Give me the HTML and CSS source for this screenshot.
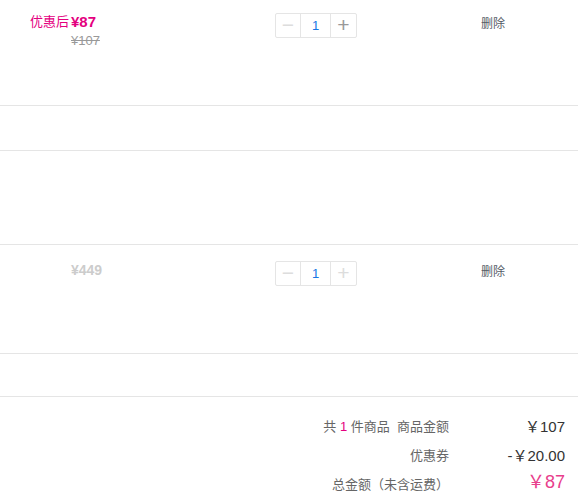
FILE: index.html
```html
<!DOCTYPE html>
<html>
  <head>
    <meta charset="UTF-8">
    <title>购物车</title>
    <link rel="stylesheet" href="styles.css">
  </head>
  <body>
    <div class="cart">
      <div class="item">
        <div class="price">
          <div class="price-now"><span class="tag">优惠后</span>¥87</div>
          <div class="price-old">¥107</div>
        </div>
        <div class="stepper">
          <span class="step off">&minus;</span>
          <span class="count">1</span>
          <span class="step">+</span>
        </div>
        <div class="del">删除</div>
      </div>
      <div class="gap small"></div>
      <div class="gap big"></div>
      <div class="item">
        <div class="price">
          <div class="price-now dead">¥449</div>
        </div>
        <div class="stepper">
          <span class="step off">&minus;</span>
          <span class="count">1</span>
          <span class="step off">+</span>
        </div>
        <div class="del">删除</div>
      </div>
      <div class="gap last"></div>
    </div>

    <div class="summary">
      <div class="label">共 <em>1</em> 件商品&nbsp;&nbsp;商品金额</div>
      <div class="value">￥107</div>
      <div class="label">优惠券</div>
      <div class="value">-￥20.00</div>
      <div class="label">总金额（未含运费）</div>
      <div class="value total">￥87</div>
    </div>
  </body>
</html>
```

FILE: styles.css
```css
body {
  margin: 0;
  font-family: "Liberation Sans", Arial, "Noto Sans CJK SC", sans-serif;
  background: #fff;
  color: #333;
}
.cart {
  margin-top: -3px;
}
.item {
  height: 108px;
  border-bottom: 1px solid #e5e5e5;
  display: flex;
  align-items: flex-start;
}
.gap {
  border-bottom: 1px solid #e5e5e5;
}
.gap.small {
  height: 44px;
}
.gap.big {
  height: 93px;
}
.gap.last {
  height: 42px;
}
.price {
  width: 204px;
  padding-left: 71px;
  padding-top: 16px;
  box-sizing: border-box;
}
.price-now {
  position: relative;
  font-size: 15px;
  font-weight: bold;
  color: #e4007f;
  line-height: 18px;
}
.price-now.dead {
  color: #ccc;
  font-size: 14px;
}
.tag {
  position: absolute;
  right: 100%;
  margin-right: 2px;
  top: 0;
  font-size: 13px;
  font-weight: normal;
  white-space: nowrap;
}
.price-old {
  font-size: 13px;
  color: #999;
  text-decoration: line-through;
  line-height: 14px;
  margin-top: 3px;
}
.stepper {
  margin-left: 71px;
  margin-top: 16px;
  display: flex;
  height: 23px;
  border: 1px solid #e5e5e5;
  border-radius: 2px;
}
.step {
  width: 24px;
  text-align: center;
  font-size: 21px;
  line-height: 22px;
  color: #999;
}
.step + .count + .step {
  width: 25px;
}
.step.off {
  color: #ddd;
}
.count {
  width: 29px;
  border-left: 1px solid #e5e5e5;
  border-right: 1px solid #e5e5e5;
  text-align: center;
  font-size: 13px;
  line-height: 23px;
  color: #1677e5;
}
.del {
  margin-left: 124px;
  margin-top: 17px;
  font-size: 12px;
  color: #555c66;
}
.summary {
  display: grid;
  grid-template-columns: 449px 116px;
  padding-top: 15px;
  font-size: 13px;
}
.label {
  text-align: right;
  color: #666;
  line-height: 29px;
}
.label em {
  font-style: normal;
  color: #e4007f;
}
.value {
  text-align: right;
  color: #333;
  font-size: 15px;
  line-height: 29px;
}
.value.total {
  color: #e83e8c;
  font-size: 18px;
  line-height: 25px;
}
```
